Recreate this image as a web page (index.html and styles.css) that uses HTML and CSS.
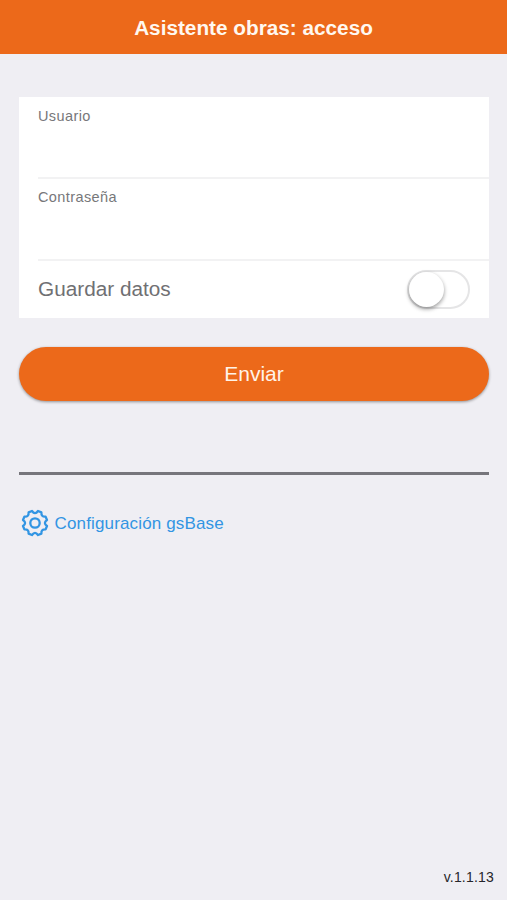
FILE: index.html
```html
<!DOCTYPE html>
<html lang="es">
<head>
<meta charset="utf-8">
<title>Asistente obras: acceso</title>
<link rel="stylesheet" href="styles.css">
</head>
<body>
<header class="toolbar"><h1 class="title">Asistente obras: acceso</h1></header>
<main class="content">
  <form class="card">
    <div class="field"><label class="label" for="user">Usuario</label><input class="input" id="user" type="text"></div>
    <div class="field"><label class="label" for="pass">Contraseña</label><input class="input" id="pass" type="password"></div>
    <div class="remember"><span class="remember-text">Guardar datos</span><span class="toggle"><span class="knob"></span></span></div>
  </form>
  <button class="submit" type="button"><span class="submit-text">Enviar</span></button>
  <hr class="divider">
  <a class="config">
    <svg class="gear" viewBox="-14 -14 28 28">
      <path d="M12 3L10.6 6.4Q6 6 6.4 10.6L3 12Q0 7.8 -3 12L-6.4 10.6Q-6 6 -10.6 6.4L-12 3Q-7.8 0 -12 -3L-10.6 -6.4Q-6 -6 -6.4 -10.6L-3 -12Q0 -7.8 3 -12L6.4 -10.6Q6 -6 10.6 -6.4L12 -3Q7.8 0 12 3Z"/>
      <circle r="4.7"/>
    </svg>
    <span class="config-text">Configuración gsBase</span>
  </a>
</main>
<footer class="version"><span class="version-text">v.1.1.13</span></footer>
</body>
</html>
```
FILE: styles.css
```css
* { box-sizing: border-box; }
body {
  margin: 0;
  height: 900px;
  display: flex;
  flex-direction: column;
  background: #efeef3;
  font-family: "Liberation Sans", Arial, sans-serif;
}
.toolbar {
  height: 54px;
  flex: none;
  display: flex;
  align-items: center;
  justify-content: center;
  background: #ec691a;
}
.title {
  margin: 1px 0 0;
  color: #fff8f0;
  font-size: 20.75px;
  line-height: 24px;
}
.content {
  flex: 1;
  padding: 43px 18px 0 19px;
}
.card {
  height: 221px;
  padding-left: 19px;
  background: #fff;
}
.field {
  display: flex;
  flex-direction: column;
  height: 82px;
  padding-top: 11px;
  border-bottom: 2px solid #f2f2f3;
}
.field + .field { padding-top: 10px; }
.label {
  color: #77777a;
  font-size: 14.5px;
  line-height: 16px;
  letter-spacing: 0.4px;
}
.input {
  flex: 1;
  width: 100%;
  min-height: 0;
  padding: 0;
  border: 0;
  outline: 0;
  background: transparent;
}
.remember {
  height: 57px;
  display: flex;
  align-items: center;
  justify-content: space-between;
  padding-right: 19px;
}
.remember-text {
  margin-bottom: 2px;
  color: #707073;
  font-size: 20.75px;
}
.toggle {
  width: 63px;
  height: 39px;
  border: 2px solid #e5e5e6;
  border-radius: 20px;
  background: #fff;
}
.knob {
  display: block;
  width: 35px;
  height: 35px;
  border-radius: 50%;
  background: #fff;
  box-shadow: 0 2px 4px rgba(0, 0, 0, 0.4);
}
.submit {
  display: flex;
  align-items: center;
  justify-content: center;
  width: 100%;
  height: 54px;
  margin: 29px 0 0;
  padding: 0;
  border: 0;
  border-radius: 27px;
  background: #ec691a;
  box-shadow: 0 1px 3px rgba(0, 0, 0, 0.4);
  color: #fff3e8;
  font: 21px/24px "Liberation Sans", Arial, sans-serif;
}
.divider {
  height: 3px;
  margin: 71px 0 0;
  border: 0;
  background: #76757b;
}
.config {
  display: flex;
  align-items: center;
  gap: 6px;
  margin: 34px 0 0 1.5px;
  color: #3295e3;
}
.gear {
  width: 28px;
  height: 28px;
  fill: none;
  stroke: #3295e3;
  stroke-width: 2.3;
  stroke-linejoin: round;
}
.config-text {
  margin-top: 1px;
  font-size: 17px;
  line-height: 20px;
  letter-spacing: 0.15px;
}
.version {
  padding: 0 13px 14px 0;
  color: #26262a;
  font-size: 14px;
  line-height: 18px;
  letter-spacing: 0.2px;
  text-align: right;
}
```
